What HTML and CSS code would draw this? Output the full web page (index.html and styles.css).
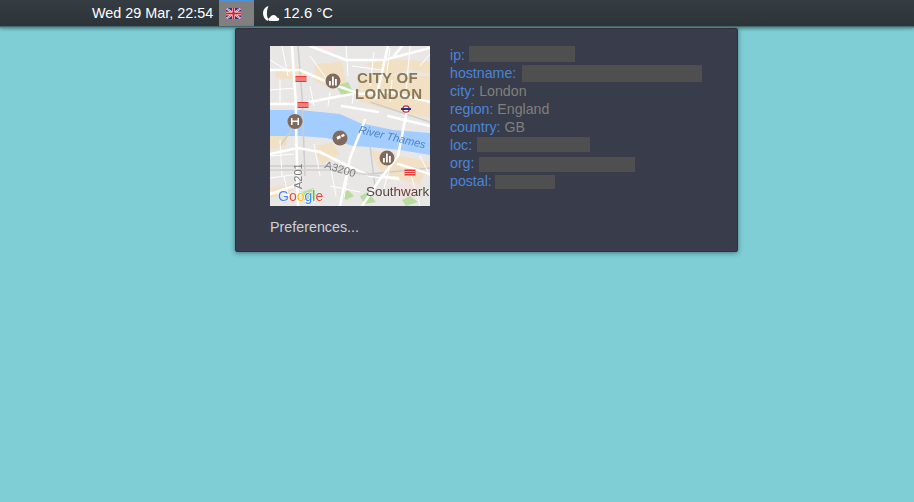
FILE: index.html
```html
<!DOCTYPE html>
<html lang="en">
<head>
  <meta charset="UTF-8">
  <meta name="viewport" content="width=device-width, initial-scale=1.0">
  <title>Desktop panel</title>
  <link rel="stylesheet" href="styles.css">
</head>
<body>
  <div class="topbar">
    <span class="clock">Wed 29 Mar, 22:54</span>
    <div class="flag-item">
      <svg class="flag" viewBox="0 0 60 40" width="15" height="11" preserveAspectRatio="none">
        <rect width="60" height="40" fill="#27398c"/>
        <path d="M0 0L60 40M60 0L0 40" stroke="#fff" stroke-width="7"/>
        <path d="M0 0L60 40M60 0L0 40" stroke="#d3212f" stroke-width="3"/>
        <path d="M30 0V40M0 20H60" stroke="#fff" stroke-width="12"/>
        <path d="M30 0V40M0 20H60" stroke="#d3212f" stroke-width="8"/>
      </svg>
    </div>
    <div class="weather">
      <svg class="weather-icon" viewBox="0 -1 18 16" width="18" height="16">
        <path d="M5.500 0C2 1 0 3.800 0 7c0 3.400 1.700 6.300 4.500 8 .3-.5.7-1 1.200-1.300C4.500 12 3.800 9.800 3.900 7.600 4 4.800 4.500 2.200 5.500 0z" fill="#fff"/>
        <path d="M7.500 15c-1.300 0-2.100-.8-2.100-1.800 0-.9.700-1.600 1.600-1.700.5-1.500 1.900-2.500 3.500-2.500 1.700 0 3.100 1 3.500 2.500 1.200.1 2.200.8 2.200 1.800s-.9 1.700-2.100 1.700z" fill="#fff"/>
      </svg>
      <span>12.6 °C</span>
    </div>
  </div>

  <div class="menu">
    <div class="menu-main">
      <svg class="map" viewBox="0 0 160 160" width="160" height="160">
        <rect width="160" height="160" fill="#e8e7e5"/>
        <!-- built up areas -->
        <g fill="#f2e0c4">
          <path d="M5 24L25 20 37 28 32 34 6 32z"/>
          <path d="M45 18L72 16 76 38 62 44 44 34z"/>
          <path d="M95 18L118 12 160 16 160 28 140 24 118 30z"/>
          <path d="M88 30L160 30 160 72 130 66 112 62 90 56z"/>
          <path d="M0 86L18 86 16 100 0 104z"/>
          <path d="M42 102L62 96 70 108 52 118z"/>
          <path d="M100 104L130 110 160 116 150 138 122 132 108 122z"/>
          <path d="M0 142L22 138 20 150 0 152z"/>
        </g>
        <path d="M120 140L148 138 146 152 130 150z" fill="#f6dfe0"/>
        <path d="M45 0H65V5H47z" fill="#f6e3e6"/>
        <g fill="#b9dd9f">
          <path d="M66 40L78 36 84 47 72 50z"/>
          <path d="M32 146L44 142 46 152 34 154z"/>
          <path d="M70 148L78 144 84 150 76 154z"/>
          <path d="M90 150L98 146 106 156 94 158z"/>
          <path d="M132 154L140 150 148 156 136 160z"/>
        </g>
        <!-- river -->
        <path d="M0 64H30L70 68 90 77 123 84 160 87V109L130 104 100 101 83 100 57 92 30 90H0z" fill="#a3ccff"/>
        <!-- rail -->
        <g fill="none" stroke="#cdcdcd" stroke-width="1.500">
          <path d="M28 0L32 50M32 50L35 130M0 120H60L100 128 160 122"/>
          <path d="M10 100L30 72M100 56L160 76M100 100L105 140"/>
        </g>
        <!-- small streets -->
        <g fill="none" stroke="#fff" stroke-width="1">
          <path d="M0 14L20 26M12 0L18 30M40 10L56 32M76 0L78 30M82 20L112 24M104 6L100 40M120 2L116 34M140 0L136 46M150 20L160 8"/>
          <path d="M0 44L26 42M10 34V58M40 40L44 60M60 46L58 60M84 46L82 58M122 34L120 56"/>
          <path d="M0 110L24 108M10 94L12 130M44 98L50 130M0 132L30 128M60 118L66 150M80 116L74 152M100 130L130 134M14 130L18 150"/>
          <path d="M120 120L112 150M140 126L150 160M0 146L26 150M60 140L90 146M150 110L160 130"/>
        </g>
        <!-- main roads -->
        <g fill="none" stroke="#fff" stroke-width="2.600" stroke-linecap="round">
          <path d="M22 0L26 60V78L28 160"/>
          <path d="M0 24L30 24 62 38 90 48 120 46 160 56"/>
          <path d="M0 58L30 58 60 52 82 48"/>
          <path d="M72 60L108 66M118 70L160 80"/>
          <path d="M40 0L76 14 114 14 160 2"/>
          <path d="M124 10L132 0M118 0L106 52"/>
          <path d="M0 108L28 102 50 106 78 120 100 130 128 132"/>
          <path d="M95 74L80 112 70 160"/>
          <path d="M137 64L128 110 108 136 92 160"/>
          <path d="M128 118L160 128"/>
          <path d="M0 148L24 140"/>
        </g>
        <path d="M0 124H60L110 130" fill="none" stroke="#d6d6d6" stroke-width="2"/>
        <!-- stations -->
        <g>
          <g transform="translate(31 33)"><rect x="-5.500" y="-3" width="11" height="6" fill="#e53935"/><path d="M-5.500-1H5.500M-5.500 1H5.500" stroke="#fff" stroke-width=".7"/></g>
          <g transform="translate(33 59)"><rect x="-5.500" y="-3" width="11" height="6" fill="#e53935"/><path d="M-5.500-1H5.500M-5.500 1H5.500" stroke="#fff" stroke-width=".7"/></g>
          <g transform="translate(140 126.500)"><rect x="-5.500" y="-3" width="11" height="6" fill="#e53935"/><path d="M-5.500-1H5.500M-5.500 1H5.500" stroke="#fff" stroke-width=".7"/></g>
          <circle cx="136" cy="63" r="3.200" fill="#fff" stroke="#c8283a" stroke-width="1.300"/>
          <rect x="131" y="62" width="10" height="2" fill="#24358c"/>
        </g>
        <!-- pois -->
        <g fill="#7f6a5b">
          <circle cx="63" cy="35" r="7.500"/>
          <circle cx="25" cy="75.500" r="7.500"/>
          <circle cx="70" cy="92" r="7.500"/>
          <circle cx="117" cy="112" r="7.500"/>
        </g>
        <g fill="#fff">
          <path d="M59 39.500V35h1.800v4.500zM62 39.500V30.500h1.800v9zM65 39.500V33h1.800v6.500z"/>
          <path d="M21 72h1.500v7H21zM27.500 72H29v7h-1.500zM21 74.500h8V76h-8z"/>
          <path d="M66.500 91l3.500-1.800 1 2.800-3.500 1.800zM71 89l3-1.200.8 2.200-3 1.200z"/>
          <path d="M113 116.500V112h1.800v4.500zM116 116.500V107.500h1.800v9zM119 116.500V110h1.800v6.500z"/>
        </g>
        <!-- labels -->
        <g font-family="Roboto, 'Liberation Sans', sans-serif">
          <text x="87" y="37" font-size="15" font-weight="700" letter-spacing=".3" fill="#8a7858">CITY OF</text>
          <text x="85" y="53" font-size="15" font-weight="700" letter-spacing=".4" fill="#8a7858">LONDON</text>
          <text x="88" y="87" font-size="11" font-style="italic" fill="#4a84c9" transform="rotate(13 88 87)">River Thames</text>
          <text x="54" y="122" font-size="11" fill="#7d7d7d" transform="rotate(17 54 122)">A3200</text>
          <text x="32" y="143" font-size="11" fill="#7d7d7d" transform="rotate(-90 32 143)">A201</text>
          <text x="96" y="150" font-size="13.400" fill="#54493a">Southwark</text>
        </g>
        <text class="google" x="8" y="155" font-size="14"><tspan fill="#4285f4">G</tspan><tspan fill="#ea4335">o</tspan><tspan fill="#fbbc05">o</tspan><tspan fill="#4285f4">g</tspan><tspan fill="#34a853">l</tspan><tspan fill="#ea4335">e</tspan></text>
      </svg>

      <ul class="info">
        <li><b>ip:</b> <span class="redact redact-ip"></span></li>
        <li><b>hostname:</b> <span class="redact redact-host"></span></li>
        <li><b>city:</b> London</li>
        <li><b>region:</b> England</li>
        <li><b>country:</b> GB</li>
        <li><b>loc:</b> <span class="redact redact-loc"></span></li>
        <li><b>org:</b> <span class="redact redact-org"></span></li>
        <li><b>postal:</b> <span class="redact redact-postal"></span></li>
      </ul>
    </div>
    <div class="prefs">Preferences...</div>
  </div>
</body>
</html>
```

FILE: styles.css
```css
* {
  margin: 0;
  padding: 0;
  box-sizing: border-box;
  font-family: 'Liberation Sans', Arial, sans-serif;
}
body {
  height: 100vh;
  overflow: hidden;
  background-color: #7fced5;
}
.topbar {
  display: flex;
  align-items: center;
  height: 26px;
  padding-left: 92px;
  background: linear-gradient(to bottom, #353c42, #2d3439);
  color: #fff;
  font-size: 14.4px;
  box-shadow: 0 1px 0 #47696d, 0 2px 0 #5a9094, 0 3px 3px rgba(30, 80, 85, 0.5);
}
.flag-item {
  display: flex;
  align-items: center;
  width: 35px;
  height: 26px;
  margin-left: 6px;
  padding-left: 7px;
  padding-bottom: 1px;
  background-color: #808080;
  border-top: 2px solid #4a90d9;
}
.weather {
  display: flex;
  align-items: center;
  gap: 2px;
  margin-left: 9px;
  font-size: 14.8px;
}
.menu {
  position: absolute;
  top: 28px;
  left: 235px;
  width: 503px;
  height: 224px;
  padding: 17px 34px 0;
  background-color: #393c4b;
  border: 1px solid #2e303c;
  border-radius: 2px;
  box-shadow: 0 1px 5px rgba(30, 60, 70, 0.6);
}
.menu-main {
  display: flex;
  gap: 20px;
}
.map {
  display: block;
  flex: none;
  filter: blur(0.5px);
}
.google {
  font-family: 'Liberation Sans', sans-serif;
  stroke: #fff;
  stroke-width: 1px;
  paint-order: stroke;
}
.info {
  list-style: none;
  font-size: 14.2px;
  line-height: 18px;
  color: #80807a;
}
.info li {
  height: 18px;
  white-space: nowrap;
}
.info b {
  font-weight: normal;
  color: #4a86d8;
}
.redact {
  display: inline-block;
  vertical-align: top;
  background-color: #4f4f4f;
}
.redact-ip {
  width: 106px;
  height: 16px;
}
.redact-host {
  width: 180px;
  height: 17px;
  margin-top: 1px;
  margin-left: 2px;
}
.redact-loc {
  width: 113px;
  height: 15px;
  margin-top: 1px;
  margin-left: 1px;
}
.redact-org {
  width: 156px;
  height: 15px;
  margin-top: 3px;
  margin-left: 1px;
}
.redact-postal {
  width: 60px;
  height: 14px;
  margin-top: 3px;
  margin-left: -1px;
}
.prefs {
  margin-top: 12px;
  font-size: 14.3px;
  line-height: 18px;
  color: #d0d0d0;
}
```
